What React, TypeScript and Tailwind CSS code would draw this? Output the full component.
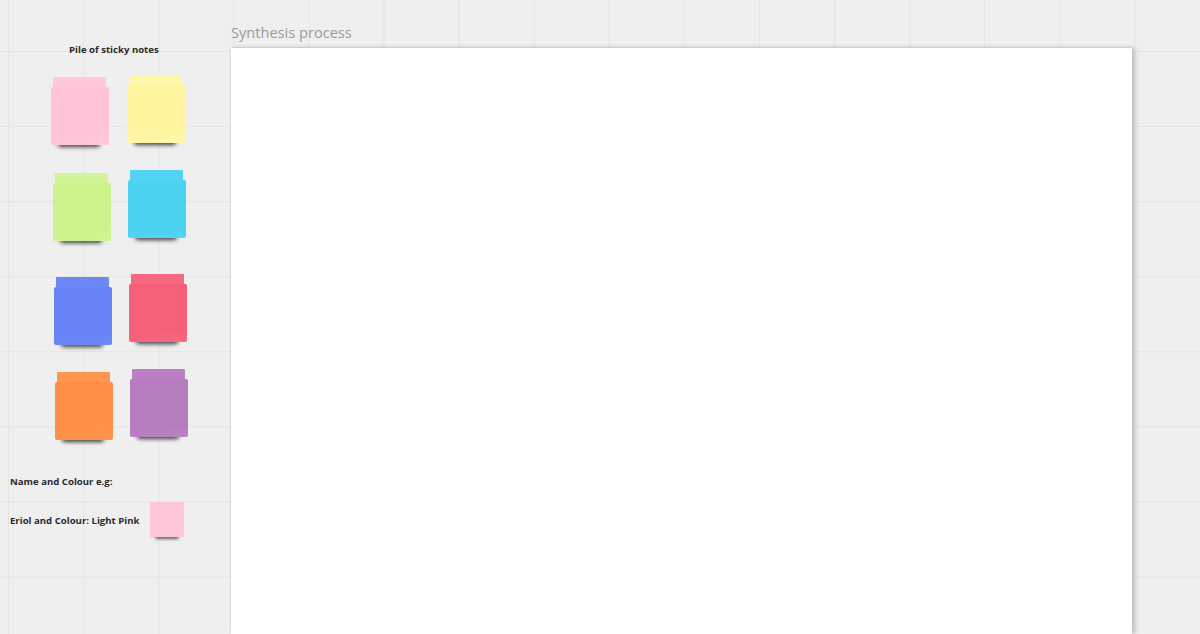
import React from "react";

function Sticky({ color, top, className = "" }: { color: string; top: string; className?: string }) {
  return (
    <div className={`relative w-[58px] h-[72px] shrink-0 ${className}`}>
      <div className="absolute left-[2px] right-[3px] top-0 h-[14px] rounded-[1px]" style={{ background: top }} />
      <div className="absolute left-[7px] right-[9px] bottom-[2px] h-[6px] rounded-full bg-black/75 blur-[2px]" />
      <div
        className="absolute left-0 right-0 top-[10px] bottom-[4px] rounded-[2px]"
        style={{ background: `linear-gradient(172deg, ${color} 0%, ${color} 75%, ${top} 100%)` }}
      />
    </div>
  );
}

export default function App() {
  return (
    <div
      className="w-[1200px] h-[634px] overflow-hidden flex bg-[#efefef] bg-[linear-gradient(to_right,#e4e4e4_1px,transparent_1px),linear-gradient(to_bottom,#e4e4e4_1px,transparent_1px)] bg-[size:75.1px_75.1px] bg-[position:8px_51px]"
      style={{ fontFamily: '"Open Sans", "Noto Sans", sans-serif' }}
    >
      {/* left column */}
      <div className="w-[231px] shrink-0 flex flex-col">
        <div className="mt-[43px] h-[32px] pl-[69px] text-[9.6px] font-bold text-[#2a2a2a] leading-[14px]">
          Pile of sticky notes
        </div>
        <div className="h-[95px] flex items-start">
          <Sticky color="#ffc3d8" top="#ffc8dc" className="ml-[51px] mt-[2px]" />
          <Sticky color="#fff5a0" top="#fff7ab" className="ml-[18px]" />
        </div>
        <div className="h-[104px] flex items-start">
          <Sticky color="#ccf28b" top="#d1f494" className="ml-[53px] mt-[3px]" />
          <Sticky color="#4cd2f3" top="#54d4f3" className="ml-[17px]" />
        </div>
        <div className="h-[95px] flex items-start">
          <Sticky color="#6784f7" top="#6c88f7" className="ml-[54px] mt-[3px]" />
          <Sticky color="#f55f78" top="#f66880" className="ml-[17px]" />
        </div>
        <div className="h-[106px] flex items-start">
          <Sticky color="#ff8f46" top="#ff954f" className="ml-[55px] mt-[3px]" />
          <Sticky color="#b77bbf" top="#ba82c2" className="ml-[17px]" />
        </div>
        <div className="pl-[10px] text-[9.6px] font-bold text-[#2a2a2a] leading-[14px]">Name and Colour e.g:</div>
        <div className="mt-[13px] flex items-center pl-[10px]">
          <div className="w-[140px] text-[9.6px] font-bold text-[#2a2a2a] leading-[14px]">Eriol and Colour: Light Pink</div>
          <div className="relative w-[34px] h-[37px]">
            <div className="absolute left-[5px] right-[5px] bottom-[0px] h-[4px] rounded-full bg-black/60 blur-[1.5px]" />
            <div className="absolute inset-x-0 top-0 bottom-[2px] bg-[#ffc6da]" />
          </div>
        </div>
      </div>

      {/* board */}
      <div className="flex-1 flex flex-col">
        <div className="mt-[22px] h-[20px] leading-[20px] text-[14.6px] text-[#9a9a9a]">Synthesis process</div>
        <div className="mt-[6px] w-[901px] h-[700px] bg-white shadow-[0_0_2px_rgba(0,0,0,0.18),3px_0_5px_rgba(0,0,0,0.18)]" />
      </div>
    </div>
  );
}
